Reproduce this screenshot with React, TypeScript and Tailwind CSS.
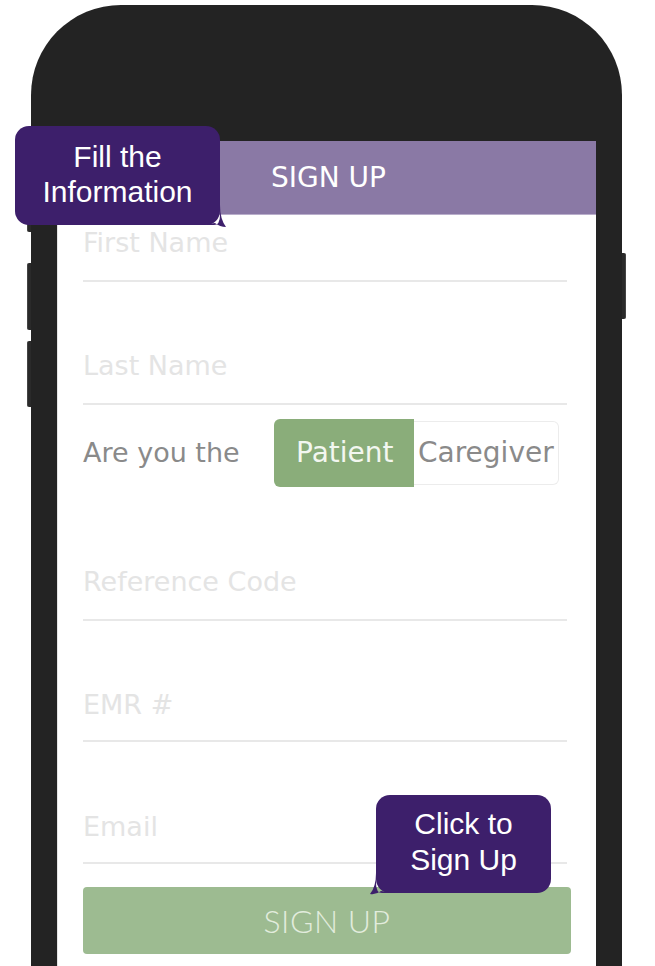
const fields1 = [
  { label: "First Name", mt: "mt-[13px]", pb: "pb-[22px]" },
  { label: "Last Name", mt: "mt-[69px]", pb: "pb-[22px]" },
];

const fields2 = [
  { label: "Reference Code", mt: "mt-[80px]", pb: "pb-[22px]" },
  { label: "EMR #", mt: "mt-[69px]", pb: "pb-[20px]" },
  { label: "Email", mt: "mt-[70px]", pb: "pb-[20px]" },
];

const Field = ({ label, mt, pb }: { label: string; mt: string; pb: string }) => (
  <div className={`${mt} ${pb} border-b-2 border-[#e8e8e8]`}>
    <div className="text-[27px] leading-[30px] text-[#e4e4e4] font-['DejaVu_Sans',sans-serif]">
      {label}
    </div>
  </div>
);

const App = () => {
  return (
    <div className="relative w-[655px] h-[966px] overflow-hidden bg-white">
      {/* phone body */}
      <div className="relative ml-[31px] mt-[5px] w-[591px] h-[1000px] rounded-t-[90px] bg-[#232323] pt-[136px] px-[26px]">
        {/* side buttons */}
        <div className="absolute left-[-4px] top-[190px] w-[4px] h-[37px] rounded-l-[2px] bg-[#2a2a2a] border-l border-[#444]" />
        <div className="absolute left-[-4px] top-[258px] w-[4px] h-[67px] rounded-l-[2px] bg-[#2a2a2a] border-l border-[#444]" />
        <div className="absolute left-[-4px] top-[336px] w-[4px] h-[66px] rounded-l-[2px] bg-[#2a2a2a] border-l border-[#444]" />
        <div className="absolute right-[-4px] top-[248px] w-[4px] h-[66px] rounded-r-[2px] bg-[#2a2a2a] border-r border-[#444]" />

        {/* screen */}
        <div className="h-full bg-white border-l border-[#e4e4e4]">
          <div className="h-[74px] bg-[#8a79a5] border-b border-[#b9aecb] flex items-center justify-center">
            <span className="text-white text-[28px] font-['DejaVu_Sans',sans-serif] pl-[3px]">SIGN UP</span>
          </div>

          <div className="pl-[25px] pr-[29px]">
            {fields1.map((f) => (
              <Field key={f.label} {...f} />
            ))}

            <div className="mt-[14px] flex items-center h-[68px]">
              <span className="w-[191px] text-[27px] text-[#8a8a8a] font-['DejaVu_Sans',sans-serif]">
                Are you the
              </span>
              <div className="flex h-full font-['DejaVu_Sans',sans-serif] text-[28px]">
                <div className="w-[140px] h-full rounded-l-[6px] bg-[#8aad7a] text-[#f3f7f0] flex items-center pl-[22px]">
                  Patient
                </div>
                <div className="w-[145px] my-[2px] rounded-r-[6px] border border-l-0 border-[#ececec] text-[#8a8a8a] flex items-center pl-[4px] whitespace-nowrap overflow-hidden">
                  Caregiver
                </div>
              </div>
            </div>

            {fields2.map((f) => (
              <Field key={f.label} {...f} />
            ))}

            <button className="mt-[23px] w-[488px] h-[67px] rounded-[4px] bg-[#9dbb91] text-[#e2ecdd] text-[32px] font-light tracking-[0.5px] font-['Lato',sans-serif]">
              SIGN UP
            </button>
          </div>
        </div>
      </div>

      {/* callout 1 */}
      <div className="absolute left-[15px] top-[126px] w-[205px] h-[99px] rounded-[14px] bg-[#3d1f6b] pt-[13px] text-center text-white text-[30px] leading-[35px] font-['Liberation_Sans',Arial,sans-serif]">
        Fill the
        <br />
        Information
      </div>
      <svg className="absolute left-[200px] top-[205px]" width="30" height="26" viewBox="0 0 30 26">
        <path d="M0 20 L14 20 Q20 20 20 10 L20 0 Q20 14 26 22 Q20 22 15 18 Z" fill="#3d1f6b" />
      </svg>

      {/* callout 2 */}
      <div className="absolute left-[376px] top-[795px] w-[175px] h-[98px] rounded-[14px] bg-[#3d1f6b] pt-[11px] text-center text-white text-[30px] leading-[36px] font-['Liberation_Sans',Arial,sans-serif]">
        Click to
        <br />
        Sign Up
      </div>
      <svg className="absolute left-[366px] top-[873px]" width="30" height="24" viewBox="0 0 30 24">
        <path d="M30 20 L16 20 Q10 20 10 10 L10 0 Q10 14 4 21 Q10 22 15 18 Z" fill="#3d1f6b" />
      </svg>
    </div>
  );
};

export default App;
